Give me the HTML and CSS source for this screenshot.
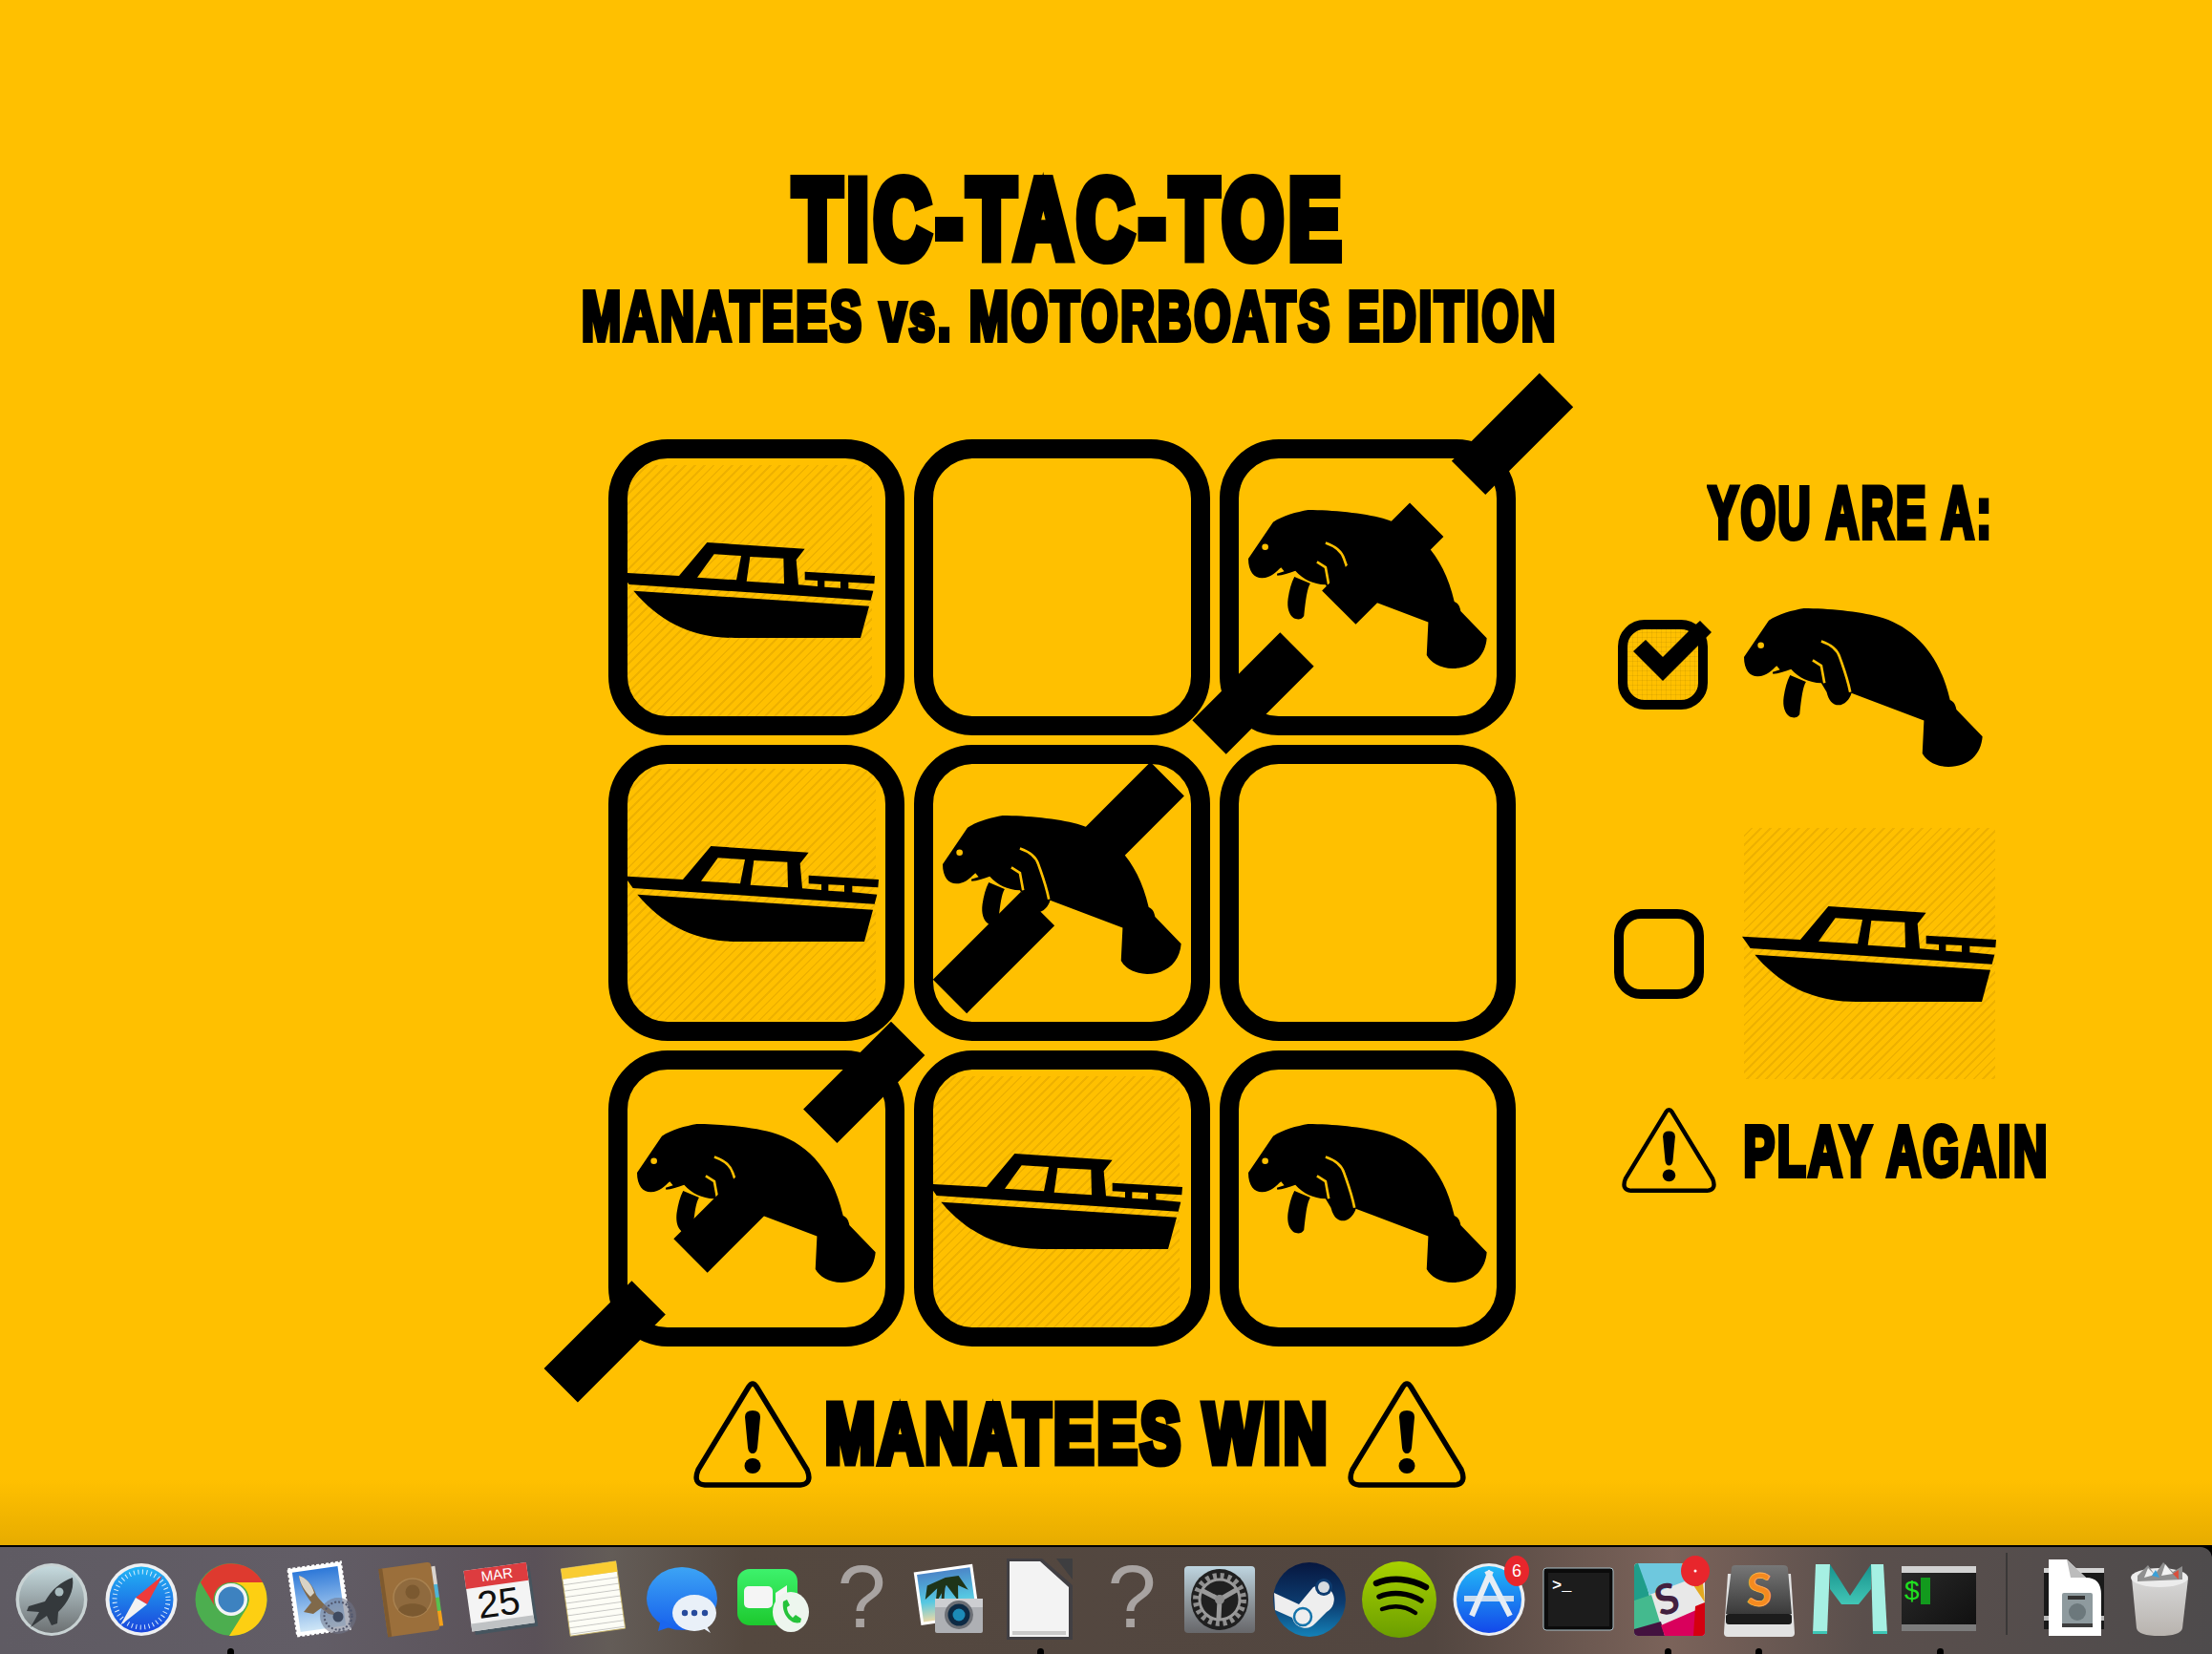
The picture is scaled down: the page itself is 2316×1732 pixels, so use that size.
FILE: index.html
```html
<!DOCTYPE html>
<html lang="en">
<head>
<meta charset="utf-8">
<title>Tic-Tac-Toe: Manatees vs. Motorboats</title>
<link rel="stylesheet" href="styles.css">
</head>
<body>
<svg class="defs" width="0" height="0" aria-hidden="true">
  <symbol id="manatee" viewBox="437 52 751 498">
    <path d="M515,90 C545,70 590,58 625,52 C700,52 800,62 860,78 C960,105 1050,185 1085,340 C1098,345 1103,358 1105,370 L1187,455 C1183,510 1145,550 1080,550 C1040,550 1010,530 998,508 L1003,405 L775,318 C770,338 752,356 735,356 C715,356 703,340 697,315 L680,287 C640,285 610,270 585,243 C565,250 545,258 528,258 L527,252 L550,245 L540,233 C525,245 510,266 480,266 C455,266 437,245 437,205 Z"/>
    <path d="M582,262 L632,283 C622,300 618,330 612,385 C605,398 590,397 580,392 C565,380 558,360 562,330 C566,305 572,280 582,262 Z"/>
    <circle cx="490" cy="168" r="10" fill="#FFC000"/>
    <path d="M680,155 C710,165 730,180 738,205 C750,240 762,270 771,315" fill="none" stroke="#FFC000" stroke-width="8"/>
    <path d="M653,215 L680,232 L690,287" fill="none" stroke="#FFC000" stroke-width="8"/>
  </symbol>
  <symbol id="boat" viewBox="432 985 798 300">
    <path fill-rule="evenodd" d="M432,1080 L615,1090 L703,985 L1010,1005 L983,1040 L990,1118 L1050,1123 L1050,1105 L1010,1103 L1010,1077 L1230,1090 L1228,1115 L1147,1110 L1147,1130 L1225,1137 L1217,1167 L458,1117 Z M725,1022 L810,1027 L795,1103 L672,1095 Z M838,1030 L943,1035 L945,1115 L827,1107 Z M1072,1106 L1122,1108 L1122,1128 L1072,1125 Z"/>
    <path d="M472,1137 L1212,1185 L1185,1285 L790,1285 C650,1285 550,1230 472,1137 Z"/>
  </symbol>
  <symbol id="warn" viewBox="0 0 124 112">
    <path d="M58,6 Q62,0 66,6 L119,93 Q125,108 112,109 L12,109 Q-1,108 5,93 Z" fill="none" stroke="#000" stroke-width="5.5" stroke-linejoin="round"/>
    <path d="M54,38 Q54,31 62,31 Q70,31 70,38 L67,70 Q66,76 62,76 Q58,76 57,70 Z"/>
    <ellipse cx="62" cy="89" rx="8.5" ry="8"/>
  </symbol>
</svg>

<main class="stage">
  <header class="heading">
    <h1 class="fit title"><span class="squeeze">TIC-TAC-TOE</span></h1>
    <h2 class="fit subtitle"><span class="squeeze">MANATEES vs. MOTORBOATS EDITION</span></h2>
  </header>

  <section class="game">
    <div class="board">
      <div class="cell"><div class="boat-tile b1"><svg class="boat"><use href="#boat"/></svg></div></div>
      <div class="cell"></div>
      <div class="cell"><svg class="manatee"><use href="#manatee"/></svg></div>
      <div class="cell"><div class="boat-tile b4"><svg class="boat"><use href="#boat"/></svg></div></div>
      <div class="cell"><svg class="manatee"><use href="#manatee"/></svg></div>
      <div class="cell"></div>
      <div class="cell"><svg class="manatee low"><use href="#manatee"/></svg></div>
      <div class="cell"><div class="boat-tile b8"><svg class="boat"><use href="#boat"/></svg></div></div>
      <div class="cell"><svg class="manatee low"><use href="#manatee"/></svg></div>
    </div>

    <aside class="side">
      <h3 class="fit you"><span class="squeeze">YOU ARE A:</span></h3>
      <div class="pick pick-manatee">
        <div class="box checked">
          <svg class="check" viewBox="0 0 94 94"><polygon points="16,33 29,21 47,39 76,10 86,1 98,13 47,64"/></svg>
        </div>
        <svg class="manatee"><use href="#manatee"/></svg>
      </div>
      <div class="pick pick-boat">
        <div class="box"></div>
        <div class="boat-tile panel-tile"><svg class="boat"><use href="#boat"/></svg></div>
      </div>
      <div class="again">
        <svg class="warn-small"><use href="#warn"/></svg>
        <span class="fit again-text"><span class="squeeze">PLAY AGAIN</span></span>
      </div>
    </aside>
  </section>

  <footer class="result">
    <svg class="warn"><use href="#warn"/></svg>
    <span class="fit result-text"><span class="squeeze">MANATEES WIN</span></span>
    <svg class="warn"><use href="#warn"/></svg>
  </footer>

  <svg class="win-line" viewBox="0 0 2316 1618"><line x1="1629.5" y1="408.5" x2="587" y2="1451"/></svg>
</main>

<div class="dock-wrap">
<nav class="dock">
  <!-- Launchpad -->
  <svg class="icon" viewBox="0 0 76 90"><defs><linearGradient id="g1" x1="0" y1="0" x2="0" y2="1"><stop offset="0" stop-color="#c5dade"/><stop offset="1" stop-color="#6c7072"/></linearGradient></defs><ellipse cx="38" cy="45" rx="37.5" ry="38" fill="#c8d2d3"/><ellipse cx="38" cy="45" rx="34" ry="35" fill="url(#g1)"/><path d="M60,22 C48,26 38,35 31,47 L14,52 L12,57 L25,58 L16,74 L33,62 L38,72 L44,70 L45,58 C55,48 62,36 60,22 Z" fill="#34393c"/><circle cx="46" cy="37" r="4.5" fill="#a9bcbf"/></svg>
  <!-- Safari -->
  <svg class="icon" viewBox="0 0 76 90"><defs><linearGradient id="g2" x1="0" y1="0" x2="0" y2="1"><stop offset="0" stop-color="#22b5f5"/><stop offset="1" stop-color="#1a45dc"/></linearGradient></defs><ellipse cx="38" cy="45" rx="37.5" ry="38" fill="#eef0f2"/><ellipse cx="38" cy="45" rx="33.5" ry="34.5" fill="url(#g2)"/><ellipse cx="38" cy="45" rx="28" ry="29" fill="none" stroke="#dbeefc" stroke-width="5" stroke-dasharray="1 3.5"/><polygon points="60,20 32,43 44,50" fill="#ef3b3b"/><polygon points="16,72 32,43 44,50" fill="#f2f2f2"/></svg>
  <!-- Chrome -->
  <svg class="icon" viewBox="0 0 76 90"><ellipse cx="38" cy="45" rx="37.5" ry="38" fill="#4cae4f"/><path d="M6,27 A37,38 0 0 1 71,27 L38,27 A18,18 0 0 0 21,52 Z" fill="#de3a2f"/><path d="M71,27 A37.5,38 0 0 1 36,83 L53,56 A18,18 0 0 0 38,27 Z" fill="#fdcf12"/><circle cx="38" cy="45" r="17" fill="#f4f4f4"/><circle cx="38" cy="45" r="13.5" fill="#3d82c0"/></svg>
  <!-- Mail -->
  <svg class="icon" viewBox="0 0 76 90"><defs><linearGradient id="g4" x1="0" y1="0" x2="0" y2="1"><stop offset="0" stop-color="#2d78d8"/><stop offset="1" stop-color="#cfe6f6"/></linearGradient></defs><g transform="rotate(-8 36 44)"><rect x="8" y="9" width="56" height="71" fill="#fff" stroke="#fff" stroke-width="2" stroke-dasharray="3 2"/><rect x="12" y="13" width="48" height="63" fill="url(#g4)"/></g><path d="M15,20 C22,22 30,30 33,40 C38,48 48,55 56,62 L46,60 L38,54 L30,60 L20,58 L28,48 C22,40 16,30 15,20 Z" fill="#80694a"/><path d="M15,20 C22,22 28,28 31,38 L27,42 C21,36 16,28 15,20 Z" fill="#d9d3c6"/><circle cx="56" cy="62" r="19" fill="#6f7488" opacity=".55"/><circle cx="56" cy="62" r="14.5" fill="none" stroke="#50566c" stroke-width="2" stroke-dasharray="2 2"/><circle cx="56" cy="63" r="5.5" fill="#3f4a60"/></svg>
  <!-- Contacts -->
  <svg class="icon" viewBox="0 0 76 90"><g transform="rotate(-8 36 45)"><rect x="62" y="14" width="6" height="20" fill="#d9d4cf"/><rect x="62" y="33" width="6" height="15" fill="#4fb4d8"/><rect x="62" y="47" width="6" height="15" fill="#58c24f"/><rect x="62" y="61" width="6" height="16" fill="#f4a119"/><rect x="9" y="9" width="55" height="72" rx="4" fill="#9b6f3b"/><rect x="9" y="9" width="4" height="72" fill="#7f5a2e"/></g><circle cx="40" cy="43" r="20" fill="#8f6a3e" stroke="#a98250" stroke-width="1.5"/><circle cx="40" cy="37" r="7.5" fill="#7b5930"/><path d="M25,56 C27,47 53,47 55,56 A20,20 0 0 1 25,56 Z" fill="#7b5930"/></svg>
  <!-- Calendar -->
  <svg class="icon" viewBox="0 0 76 90"><g transform="rotate(-8 38 45)"><rect x="7" y="14" width="66" height="64" fill="#46555f"/><rect x="4" y="10" width="66" height="64" fill="#f4f4f4"/><rect x="4" y="10" width="66" height="19" fill="#dd3c3f"/><rect x="4" y="66" width="66" height="8" fill="#bfc2c4"/></g><text class="cal-month" x="35" y="24" transform="rotate(-8 35 24)">MAR</text><text class="cal-day" x="38" y="62" transform="rotate(-8 38 62)">25</text></svg>
  <!-- Notes -->
  <svg class="icon" viewBox="0 0 76 90"><defs><pattern id="g7" width="10" height="6.5" patternUnits="userSpaceOnUse"><rect width="10" height="6.5" fill="#fdfdf6"/><rect y="5.5" width="10" height="1" fill="#c8c8c4"/></pattern></defs><g transform="rotate(-8 41 44)"><rect x="12" y="8.5" width="58" height="71" fill="url(#g7)" stroke="#c8b464" stroke-width=".8"/><rect x="12" y="8.5" width="58" height="11" fill="#f9cc32"/></g></svg>
  <!-- Messages -->
  <svg class="icon" viewBox="0 0 76 90"><defs><linearGradient id="g8" x1="0" y1="0" x2="0" y2="1"><stop offset="0" stop-color="#3ca4f5"/><stop offset="1" stop-color="#1760ec"/></linearGradient></defs><ellipse cx="40" cy="44" rx="37" ry="33" fill="url(#g8)"/><path d="M18,66 L15,78 L30,73 Z" fill="#1b66ee"/><ellipse cx="53" cy="59" rx="23" ry="19" fill="#e9f0f8"/><path d="M62,75 L70,80 L66,73 Z" fill="#e9f0f8"/><circle cx="43" cy="59" r="3.2" fill="#264a9c"/><circle cx="53" cy="59" r="3.2" fill="#264a9c"/><circle cx="64" cy="59" r="3.2" fill="#264a9c"/></svg>
  <!-- FaceTime -->
  <svg class="icon" viewBox="0 0 76 90"><defs><linearGradient id="g9" x1="0" y1="0" x2="0" y2="1"><stop offset="0" stop-color="#3df26c"/><stop offset="1" stop-color="#1dc92e"/></linearGradient></defs><rect x="4" y="13" width="63" height="59" rx="13" fill="url(#g9)"/><rect x="11" y="31" width="30" height="23" rx="5" fill="#f5f5f5"/><path d="M44,38 L56,30 L56,56 L44,48 Z" fill="#f5f5f5"/><ellipse cx="60" cy="58" rx="19" ry="21" fill="#edf6ee"/><path d="M52,47 C50,60 60,72 70,69 L71,65 L65,61 L62,64 C58,61 56,57 56,53 L59,51 L56,45 Z" fill="#25c33a"/></svg>
  <!-- Missing -->
  <svg class="icon" viewBox="0 0 76 90"><text class="missing" x="40" y="74">?</text></svg>
  <!-- iPhoto -->
  <svg class="icon" viewBox="0 0 76 90"><defs><linearGradient id="g11" x1="0" y1="0" x2="0" y2="1"><stop offset="0" stop-color="#4b86c8"/><stop offset=".6" stop-color="#56c8e2"/><stop offset="1" stop-color="#e8d9a8"/></linearGradient></defs><g transform="rotate(-8 34 38)"><rect x="4" y="12" width="62" height="56" fill="#fff"/><rect x="7" y="15" width="56" height="50" fill="url(#g11)"/><path d="M28,60 C30,42 32,32 36,24" stroke="#26321c" stroke-width="3" fill="none"/><path d="M36,22 L16,28 L12,42 L26,32 L22,48 L36,30 L46,48 L48,32 L58,38 L50,22 Z" fill="#1e3418"/></g><rect x="23" y="44" width="50" height="36" rx="2" fill="#aeb0b4"/><rect x="23" y="44" width="50" height="9" fill="#cdced1"/><circle cx="48" cy="61" r="15" fill="#6d7076"/><circle cx="48" cy="61" r="11.5" fill="#0d2a44"/><circle cx="48" cy="61" r="6.5" fill="#1c8bb8"/></svg>
  <!-- LibreOffice -->
  <svg class="icon" viewBox="0 0 76 90"><path d="M55,2 L72,2 L72,24 Z" fill="#3e3e40"/><path d="M3,2 L40,2 L72,30 L72,87 L3,87 Z" fill="#413f43"/><path d="M6,5 L38,5 L68,32 L68,84 L6,84 Z" fill="#f3f3f3"/><path d="M9,78 L65,78 L65,82 L9,82 Z" fill="#c9c9c9"/></svg>
  <!-- Missing -->
  <svg class="icon" viewBox="0 0 76 90"><text class="missing" x="40" y="74">?</text></svg>
  <!-- System Preferences -->
  <svg class="icon" viewBox="0 0 76 90"><defs><linearGradient id="g14" x1="0" y1="0" x2="0" y2="1"><stop offset="0" stop-color="#bed5e0"/><stop offset=".55" stop-color="#8d959a"/><stop offset="1" stop-color="#67676a"/></linearGradient></defs><rect x="1" y="10" width="74" height="70" rx="4" fill="url(#g14)"/><ellipse cx="38" cy="45" rx="30" ry="32" fill="#202020"/><circle cx="38" cy="45" r="25" fill="none" stroke="#8f8f8f" stroke-width="6" stroke-dasharray="4 3.85"/><circle cx="38" cy="45" r="21" fill="none" stroke="#9a9a9a" stroke-width="3"/><path d="M38,45 L38,25 M38,45 L21,56 M38,45 L55,56" stroke="#9a9a9a" stroke-width="5" transform="rotate(60 38 45)"/><circle cx="38" cy="45" r="5" fill="#8d8d8d"/></svg>
  <!-- Steam -->
  <svg class="icon" viewBox="0 0 76 90"><defs><linearGradient id="g15" x1="0" y1="0" x2="0" y2="1"><stop offset="0" stop-color="#07173f"/><stop offset=".55" stop-color="#0c3c70"/><stop offset="1" stop-color="#1482b8"/></linearGradient></defs><ellipse cx="38" cy="45" rx="38" ry="39" fill="url(#g15)"/><path d="M1,38 L27,50 L42,32 A14,14 0 1 1 56,58 L44,70 A14,14 0 0 1 20,64 L2,56 Z" fill="#eeeeee"/><circle cx="53" cy="32" r="9" fill="#0e3c70"/><circle cx="53" cy="32" r="6" fill="#d7dce0"/><circle cx="31" cy="63" r="9" fill="none" stroke="#1574ab" stroke-width="2.5"/></svg>
  <!-- Spotify -->
  <svg class="icon" viewBox="0 0 76 90"><defs><linearGradient id="g16" x1="0" y1="0" x2="0" y2="1"><stop offset="0" stop-color="#a8d200"/><stop offset="1" stop-color="#6b9e00"/></linearGradient></defs><ellipse cx="38" cy="45" rx="39" ry="40" fill="url(#g16)"/><path d="M14,28 C30,21 50,23 66,32" fill="none" stroke="#000" stroke-width="6.5" stroke-linecap="round"/><path d="M17,42 C31,36 48,38 61,46" fill="none" stroke="#000" stroke-width="5.5" stroke-linecap="round"/><path d="M20,55 C33,50 45,52 55,59" fill="none" stroke="#000" stroke-width="4.5" stroke-linecap="round"/></svg>
  <!-- App Store -->
  <svg class="icon" viewBox="0 0 76 90"><defs><linearGradient id="g17" x1="0" y1="0" x2="0" y2="1"><stop offset="0" stop-color="#22b8f7"/><stop offset="1" stop-color="#1348ea"/></linearGradient></defs><ellipse cx="38" cy="45" rx="37.5" ry="38" fill="#eceef0"/><ellipse cx="38" cy="45" rx="34" ry="35" fill="url(#g17)"/><rect x="12" y="41" width="52" height="6" fill="#c8dcf0"/><path d="M40,15 L20,62 M36,15 L60,62" stroke="#e6edf4" stroke-width="6" fill="none"/><ellipse cx="67" cy="15" rx="13" ry="16" fill="#e8262c"/><text class="badge-num" x="67" y="21">6</text></svg>
  <!-- Terminal -->
  <svg class="icon" viewBox="0 0 76 90"><rect x="1" y="12" width="73" height="65" rx="3" fill="#0b0b0b" stroke="#a9c0c8" stroke-width="1"/><rect x="6" y="17" width="64" height="56" fill="#1c1c1c"/><text class="term-prompt" x="10" y="35">&gt;_</text></svg>
  <!-- Slack -->
  <svg class="icon" viewBox="0 0 76 90"><defs><clipPath id="c19"><rect x="2" y="7" width="74" height="76" rx="4"/></clipPath></defs><g clip-path="url(#c19)"><rect x="2" y="7" width="74" height="76" fill="#e8e8e8"/><polygon points="2,7 10,7 18,42 2,48" fill="#1f9d8a"/><polygon points="6,7 52,7 60,24 18,40" fill="#6ec8de"/><polygon points="2,46 20,40 30,72 2,83" fill="#44ba8e"/><polygon points="2,76 30,68 34,83 2,83" fill="#43123f"/><polygon points="30,72 76,52 76,83 34,83" fill="#d9005c"/><polygon points="66,52 76,48 76,83 64,83" fill="#d40010"/><polygon points="52,7 72,7 76,48 60,24" fill="#e3a81f"/></g><text class="slack-s" x="38" y="60" transform="rotate(-17 38 50)">S</text><ellipse cx="66" cy="15" rx="15" ry="16" fill="#e8262c"/><circle cx="66" cy="15" r="1.5" fill="#fff"/></svg>
  <!-- Sublime -->
  <svg class="icon" viewBox="0 0 76 90"><defs><linearGradient id="g20" x1="0" y1="0" x2="0" y2="1"><stop offset="0" stop-color="#777"/><stop offset="1" stop-color="#3a3a3a"/></linearGradient></defs><path d="M6,18 L2,80 Q2,84 6,84 L72,84 Q76,84 76,80 L72,18 Z" fill="#e2e2e2"/><path d="M10,12 Q10,9 14,9 L64,9 Q69,9 69,13 L73,60 L4,60 Z" fill="url(#g20)"/><rect x="4" y="60" width="69" height="11" rx="3" fill="#1c1c1c"/><text class="sublime-s" x="39" y="52">S</text></svg>
  <!-- Marked -->
  <svg class="icon" viewBox="0 0 76 90"><defs><linearGradient id="g21" x1="0" y1="0" x2="0" y2="1"><stop offset="0" stop-color="#16918c"/><stop offset="1" stop-color="#42c6b6"/></linearGradient></defs><polygon points="19,8 40,41 62,8 62,34 49,50 31,50 19,34" fill="url(#g21)"/><polygon points="4,8 19,8 16,81 1,81" fill="#a6f0e3"/><polygon points="62,8 75,8 79,81 64,81" fill="#a6f0e3"/><rect x="1" y="78" width="15" height="3" fill="#3ec7b6"/><rect x="64" y="78" width="15" height="3" fill="#3ec7b6"/></svg>
  <!-- iTerm -->
  <svg class="icon" viewBox="0 0 76 90"><defs><linearGradient id="g22" x1="0" y1="0" x2="1" y2="1"><stop offset="0" stop-color="#2a2a2a"/><stop offset="1" stop-color="#0f0f0f"/></linearGradient></defs><rect x="0" y="10" width="78" height="68" fill="url(#g22)"/><rect x="0" y="10" width="78" height="7" fill="#d2d2d2"/><rect x="0" y="71" width="78" height="7" fill="#7c7c7c"/><text class="iterm-d" x="3" y="45">$</text><rect x="20" y="22" width="10" height="28" fill="#129a1d"/></svg>
  <span class="sep"></span>
  <!-- Applications file -->
  <svg class="icon" viewBox="0 0 76 90"><rect x="9" y="14" width="63" height="62" fill="#191919"/><rect x="9" y="12" width="63" height="5" fill="#d5d5d5"/><rect x="9" y="62" width="63" height="5" fill="#b9b9b9"/><path d="M14,3 L33,3 L53,22 Q69,22 69,40 L69,83 L14,83 Z" fill="#fff"/><path d="M33,3 L53,22 L37,22 Z" fill="#bcbcbc"/><rect x="28" y="38" width="32" height="34" rx="2" fill="#8e9a9e"/><rect x="34" y="41" width="18" height="4" fill="#333"/><circle cx="44" cy="58" r="9" fill="#6c787c"/><rect x="28" y="70" width="32" height="4" fill="#3d3d3d"/></svg>
  <!-- Trash -->
  <svg class="icon" viewBox="0 0 76 90"><defs><linearGradient id="g25" x1="0" y1="0" x2="0" y2="1"><stop offset="0" stop-color="#d7d7d7"/><stop offset="1" stop-color="#b8b3ae"/></linearGradient></defs><path d="M7,23 L12,75 Q14,83 36,83 Q58,83 60,75 L66,23 Z" fill="url(#g25)"/><ellipse cx="36" cy="22" rx="30" ry="10" fill="#ececec"/><path d="M13,20 L24,9 L31,19 L40,6 L50,16 L60,10 L60,24 L13,26 Z" fill="#8f8f8f"/><path d="M24,12 L31,19 L20,22 Z" fill="#efefef"/><path d="M42,8 L50,18 L38,20 Z" fill="#f2f2f2"/><path d="M28,20 L32,14 L36,22 Z" fill="#3aa0d8"/><path d="M50,18 L56,14 L56,24 Z" fill="#d9503c"/></svg>
</nav>
<span class="run r1"></span><span class="run r2"></span><span class="run r3"></span><span class="run r4"></span><span class="run r5"></span>
</div>
</body>
</html>
```
FILE: styles.css
```css
* { box-sizing: border-box; }
html, body { margin: 0; padding: 0; }
body {
  width: 2316px;
  height: 1732px;
  overflow: hidden;
  display: flex;
  flex-direction: column;
  font-family: "Liberation Sans", Arial, sans-serif;
  color: #000;
  background: #000;
}
.defs { position: absolute; }

.stage {
  position: relative;
  height: 1618px;
  flex: none;
  padding: 178px 0 0 610px;
  background: linear-gradient(to bottom, #FFC000 0, #FFC000 1550px, #E7AC00 1618px);
}

.heading { width: 1018px; }
.fit {
  display: flex;
  justify-content: center;
  margin: 0;
  font-weight: 700;
  white-space: nowrap;
}
.squeeze { display: block; flex: none; -webkit-text-stroke-color: #000; }

.title { height: 104px; font-size: 117px; line-height: 104px; padding-left: 3px; }
.title .squeeze { -webkit-text-stroke-width: 12px; letter-spacing: 8px; transform: scaleX(.702); }
.subtitle { margin-top: 16px; height: 66px; font-size: 72px; line-height: 66px; padding-left: 3px; }
.subtitle .squeeze { -webkit-text-stroke-width: 6px; letter-spacing: 4px; transform: scaleX(.687); }

.game { display: flex; margin: 96px 0 0 27px; }
.board {
  display: grid;
  grid-template-columns: repeat(3, 310px);
  grid-auto-rows: 310px;
  gap: 10px;
  flex: none;
}
.cell {
  border: 20px solid #000;
  border-radius: 62px;
  overflow: hidden;
  display: flex;
  align-items: center;
  justify-content: flex-start;
}
.manatee { width: 250px; height: 166px; flex: none; margin-left: 10px; }
.cell .manatee { margin-top: 4px; }
.cell .manatee.low { margin-top: 10px; }

.boat-tile {
  width: 263px;
  height: 263px;
  flex: none;
  display: flex;
  align-items: center;
  background: repeating-linear-gradient(135deg, rgba(150,100,0,0) 0, rgba(150,100,0,0) 5px, rgba(150,100,0,.16) 5px, rgba(150,100,0,.16) 7px);
}
.boat { width: 266px; height: 100px; flex: none; }
.b1 { margin: 6px 0 0 -7px; }
.b4 { margin: 2px 0 0 -3px; }
.b8 { margin: 6px 0 0 -5px; }
.panel-tile .boat { margin-left: -2px; }

.side { margin-left: 103px; display: flex; flex-direction: column; align-items: flex-start; }
.you { width: 297px; margin: 42px 0 0 99px; height: 70px; font-size: 76px; line-height: 70px; }
.you .squeeze { -webkit-text-stroke-width: 6px; letter-spacing: 4px; transform: scaleX(.62); }
.pick { display: flex; }
.pick-manatee { margin-top: 65px; padding-left: 4px; gap: 38px; align-items: flex-start; }
.pick-manatee .box { margin-top: 12px; }
.pick-manatee .manatee { margin: 0; }
.pick-boat { margin-top: 64px; gap: 42px; align-items: center; }
.box {
  position: relative;
  width: 94px;
  height: 94px;
  flex: none;
  border: 10px solid #000;
  border-radius: 28px;
}
.checked {
  background:
    repeating-linear-gradient(0deg, rgba(0,0,0,.06) 0, rgba(0,0,0,.06) 1px, transparent 1px, transparent 5px),
    repeating-linear-gradient(90deg, rgba(0,0,0,.06) 0, rgba(0,0,0,.06) 1px, transparent 1px, transparent 5px);
}
.check { position: absolute; left: -10px; top: -10px; width: 94px; height: 94px; overflow: visible; }
.again { display: flex; align-items: center; gap: 28px; margin: 29px 0 0 8px; }
.warn-small { width: 99px; height: 91px; flex: none; overflow: visible; }
.again-text { width: 318px; height: 66px; font-size: 75px; line-height: 66px; padding-left: 3px; }
.again-text .squeeze { -webkit-text-stroke-width: 6px; letter-spacing: 4px; transform: scaleX(.652); }

.result { display: flex; align-items: center; margin: 36px 0 0 116px; }
.warn { width: 124px; height: 112px; flex: none; overflow: visible; }
.result-text { width: 556px; height: 80px; font-size: 88px; line-height: 80px; margin: -2px 5px 0 0; }
.result-text .squeeze { -webkit-text-stroke-width: 9px; letter-spacing: 5px; transform: scaleX(.712); }

.win-line {
  position: absolute;
  left: 0;
  top: 0;
  width: 2316px;
  height: 1618px;
  pointer-events: none;
}
.win-line line { stroke: #000; stroke-width: 50; stroke-dasharray: 130 62; }

.dock-wrap { position: relative; height: 114px; flex: none; padding-top: 2px; background: #000; }
.dock {
  height: 112px;
  padding: 10px 0 0 16px;
  display: flex;
  gap: 18.05px;
  align-items: flex-start;
  border-top-right-radius: 12px;
  background: linear-gradient(to right, #5f5b63 0, #625d66 330px, #5a5158 560px, #635c57 640px, #54483f 780px, #524640 1500px, #7b635a 1750px, #5a4f4c 1950px, #4e4b4c 2316px);
}
.icon { width: 76px; height: 90px; flex: none; overflow: visible; }
.sep { width: 2px; height: 86px; margin: -4px 11px 0 15px; flex: none; background: #3a3837; }
.run { position: absolute; bottom: 0; width: 7px; height: 6px; border-radius: 4px 4px 0 0; background: #000; }
.r1 { left: 238px; }
.r2 { left: 1086px; }
.r3 { left: 1743px; }
.r4 { left: 1838px; }
.r5 { left: 2028px; }

.missing { font: 400 92px "Liberation Sans", sans-serif; fill: #a8a3a1; text-anchor: middle; }
.cal-month { font: 400 15px "Liberation Sans", sans-serif; fill: #fff; text-anchor: middle; }
.cal-day { font: 400 40px "Liberation Sans", sans-serif; fill: #111; text-anchor: middle; }
.badge-num { font: 400 18px "Liberation Sans", sans-serif; fill: #fff; text-anchor: middle; }
.term-prompt { font: 700 17px "Liberation Mono", monospace; fill: #fff; }
.slack-s { font: 700 44px "Lato", sans-serif; fill: #43203f; text-anchor: middle; }
.sublime-s { font: 700 48px "Lato", sans-serif; fill: #f58a1f; stroke: #ffb24d; stroke-width: .8; text-anchor: middle; }
.iterm-d { font: 400 28px "Liberation Sans", sans-serif; fill: #1fe01f; }
```
